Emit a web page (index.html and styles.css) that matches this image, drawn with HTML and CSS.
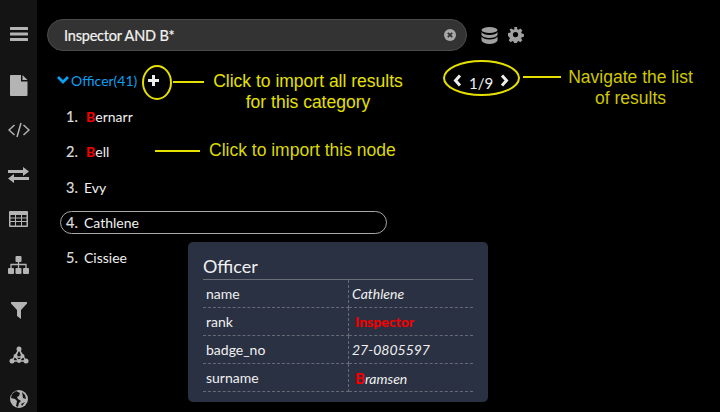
FILE: index.html
```html
<!DOCTYPE html>
<html>
  <head>
    <meta charset="utf-8">
    <link rel="stylesheet" href="styles.css">
  </head>
  <body>
    <div class="app">
      <nav class="sidebar">
        <svg class="icon menu" width="18" height="16" viewBox="0 0 18 16"><path d="M1 1h16a1 1 0 0 1 0 3H1a1 1 0 0 1 0-3zM1 6.500h16a1 1 0 0 1 0 3H1a1 1 0 0 1 0-3zM1 12h16a1 1 0 0 1 0 3H1a1 1 0 0 1 0-3z"/></svg>
        <svg class="icon file" width="18" height="21" viewBox="0 0 18 21"><path d="M1 0h10v6.500h6.500V20a1 1 0 0 1-1 1H1a1 1 0 0 1-1-1V1a1 1 0 0 1 1-1zM12.500 0l5 5h-5z"/></svg>
        <svg class="icon code" width="22" height="16" viewBox="0 0 22 16"><path d="M6.500 3L1 8l5.500 5M15.500 3L21 8l-5.500 5M13 1L9 15" fill="none" stroke="#b4b4b4" stroke-width="1.500"/></svg>
        <svg class="icon swap" width="21" height="16" viewBox="0 0 21 16"><path d="M0 3h15V0l6 4.500-6 4.500V6H0zM21 10H6V7L0 11.500 6 16v-3h15z"/></svg>
        <svg class="icon table" width="19" height="16" viewBox="0 0 19 16"><path fill-rule="evenodd" d="M1 0h17a1 1 0 0 1 1 1v14a1 1 0 0 1-1 1H1a1 1 0 0 1-1-1V1a1 1 0 0 1 1-1zM1.500 4v2.500h4.500V4zM7 4v2.500h5V4zM13 4v2.500h4.500V4zM1.500 7.500V10h4.500V7.500zM7 7.500V10h5V7.500zM13 7.500V10h4.500V7.500zM1.500 11v3.500h4.500V11zM7 11v3.500h5V11zM13 11v3.500h4.500V11z"/></svg>
        <svg class="icon tree" width="21" height="18" viewBox="0 0 21 18"><rect x="7.500" y="0" width="6" height="6" rx="1"/><rect x="0" y="12" width="6" height="6" rx="1"/><rect x="7.500" y="12" width="6" height="6" rx="1"/><rect x="15" y="12" width="6" height="6" rx="1"/><path d="M3 12V8.500h15V12M10.500 6v6" fill="none" stroke="#b4b4b4" stroke-width="1.300"/></svg>
        <svg class="icon filter" width="16" height="17" viewBox="0 0 16 17"><path d="M0 0h16v1.500L10 8v9L6 14V8L0 1.500z"/></svg>
        <svg class="icon graph" width="20" height="18" viewBox="0 0 20 18"><path d="M10 3L3 15h14zM10 3l-3.500 8h7zM6.500 11L10 15l3.500-4M3 15h14" fill="none" stroke="#b4b4b4" stroke-width="1.300"/><circle cx="10" cy="3" r="2.500"/><circle cx="3" cy="15" r="2.500"/><circle cx="17" cy="15" r="2.500"/><circle cx="6.500" cy="10" r="2"/><circle cx="13.500" cy="10" r="2"/><circle cx="10" cy="15" r="2"/></svg>
        <svg class="icon globe" width="18" height="18" viewBox="0 0 18 18"><circle cx="9" cy="9" r="9"/><path d="M6 1L2 4 1 8l4 1 2 2-1 5 2 1 1-4 2-2-3-2-1-2 2-1 1-3zM12 2l3 3 1 4-3-1zM11 14l4-2-3 4z" fill="#141414"/></svg>
      </nav>

      <main class="content">
        <div class="topbar">
          <div class="searchbox">
            <span class="query">Inspector AND B*</span>
            <svg class="clear" width="12" height="12" viewBox="0 0 12 12"><circle cx="6" cy="6" r="6" fill="#a8a8a8"/><path d="M3.800 3.800l4.400 4.400M8.200 3.800L3.800 8.200" stroke="#333" stroke-width="1.800"/></svg>
          </div>
          <svg class="db" width="17" height="17" viewBox="0 0 17 17"><g fill="#a0a0a0"><ellipse cx="8.500" cy="3" rx="8" ry="3"/><path d="M.5 5c1 2 4 3 8 3s7-1 8-3v3c-1 2-4 3-8 3s-7-1-8-3z"/><path d="M.5 9.500c1 2 4 3 8 3s7-1 8-3v4c-1 2-4 3.500-8 3.500s-7-1.500-8-3.500z"/></g></svg>
          <svg class="gear" width="16" height="16" viewBox="0 0 16 16"><path fill="#a0a0a0" fill-rule="evenodd" d="M6.500 0h3l.4 2.300 1.300.6L13.200 1.600l2.100 2.100-1.300 2 .6 1.300 2.300.5v3l-2.300.4-.6 1.300 1.300 2-2.100 2.100-2-1.300-1.300.6-.4 2.300h-3l-.4-2.300-1.300-.6-2 1.300L.700 14.200l1.300-2-.6-1.300L0 9.500v-3l2.300-.5.6-1.300-1.300-2L3.700 1.600l2 1.300 1.300-.6zM8 5.200a2.800 2.800 0 1 0 0 5.600 2.800 2.800 0 0 0 0-5.600z" transform="scale(.94)"/></svg>
        </div>

        <div class="results">
          <div class="category">
            <svg class="chevron" width="12" height="8" viewBox="0 0 12 8"><path d="M1 1l5 5 5-5" fill="none" stroke="#0d9fef" stroke-width="2.800"/></svg>
            <span>Officer(41)</span>
            <svg class="plus" width="11" height="11" viewBox="0 0 11 11"><path d="M5.500 0v11M0 5.500h11" stroke="#eee" stroke-width="3"/></svg>
          </div>
          <ol class="list">
            <li class="row"><span class="num">1.</span><span class="name match-gap"><b class="hit">B</b>ernarr</span></li>
            <li class="row"><span class="num">2.</span><span class="name match-gap"><b class="hit">B</b>ell</span></li>
            <li class="row"><span class="num">3.</span><span class="name">Evy</span></li>
            <li class="row current"><span class="num">4.</span><span class="name">Cathlene</span></li>
            <li class="row"><span class="num">5.</span><span class="name">Cissiee</span></li>
          </ol>
        </div>

        <div class="pager">
          <svg width="9" height="13" viewBox="0 0 9 13"><path d="M7 1.500L2.500 6.500 7 11.500" fill="none" stroke="#eee" stroke-width="3"/></svg>
          <span class="pages">1/9</span>
          <svg width="9" height="13" viewBox="0 0 9 13"><path d="M2 1.500L6.500 6.500 2 11.500" fill="none" stroke="#eee" stroke-width="3"/></svg>
        </div>

        <section class="popup">
          <h3 class="popup-title">Officer</h3>
          <table class="props">
            <tr><td>name</td><td class="val">Cathlene</td></tr>
            <tr><td>rank</td><td class="val"><b class="hit indent">Inspector</b></td></tr>
            <tr><td>badge_no</td><td class="val">27-0805597</td></tr>
            <tr><td>surname</td><td class="val"><b class="hit indent big">B</b>ramsen</td></tr>
          </table>
        </section>
      </main>

      <!-- annotations drawn over the screenshot -->
      <div class="ring ring-plus"></div>
      <div class="ring ring-pager"></div>
      <div class="line line-plus"></div>
      <div class="line line-node"></div>
      <div class="line line-pager"></div>
      <div class="note note-all">Click to import all results<br>for this category</div>
      <div class="note note-node">Click to import this node</div>
      <div class="note note-nav">Navigate the list<br>of results</div>
    </div>
  </body>
</html>
```

FILE: styles.css
```css
html, body {
  margin: 0;
  padding: 0;
  background: #000;
}

.app {
  position: relative;
  display: flex;
  width: 720px;
  height: 412px;
  overflow: hidden;
  font-family: Lato, sans-serif;
  color: #f0f0f0;
}

.sidebar {
  width: 37px;
  flex: none;
  background: #141414;
  display: flex;
  flex-direction: column;
  align-items: center;
  padding-top: 26px;
  box-sizing: border-box;
}
.icon { fill: #b4b4b4; display: block; flex: none; }
.menu { margin-bottom: 33px; }
.file { margin-bottom: 26px; }
.code { margin-bottom: 29px; }
.swap { margin-bottom: 28px; }
.table { margin-bottom: 29px; }
.tree { margin-bottom: 28px; }
.filter { margin-bottom: 27px; }
.graph { margin-bottom: 26px; }

.content {
  position: relative;
  flex: 1;
  padding: 19px 0 0 10px;
}

.topbar {
  display: flex;
  align-items: center;
}
.searchbox {
  width: 392px;
  height: 30px;
  background: #333;
  border: 1px solid #4a4a4a;
  border-radius: 16px;
  display: flex;
  align-items: center;
  justify-content: space-between;
  padding: 0 10px 0 16px;
}
.query {
  font-size: 14.500px;
  letter-spacing: -0.2px;
  -webkit-text-stroke: 0.2px #f2f2f2;
  color: #f2f2f2;
}
.db { margin-left: 14px; }
.gear { margin-left: 10px; }

.results {
  padding: 16px 0 0 10px;
}
.category {
  display: flex;
  align-items: center;
  font-size: 14px;
  color: #0d9fef;
  height: 26px;
}
.chevron { margin-right: 2px; }
.plus { margin-left: 11px; }

.list {
  list-style: none;
  margin: 0;
  padding: 12px 0 0 3px;
}
.row {
  display: flex;
  align-items: center;
  height: 23px;
  margin-bottom: 12.300px;
  font-size: 14px;
  width: 327px;
  border: 1px solid transparent;
  border-radius: 12px;
  box-sizing: border-box;
  padding-left: 5px;
}
.current { border-color: #a8a8a8; }
.num {
  width: 18px;
  font-size: 14.500px;
  -webkit-text-stroke: 0.2px #ddd;
  color: #ddd;
}
.match-gap { padding-left: 2px; }
.hit { color: #f00000; font-weight: 900; }

.pager {
  position: absolute;
  left: 416px;
  top: 69px;
  display: flex;
  align-items: center;
  gap: 7px;
}
.pages { font-size: 15px; padding-top: 5px; }

.popup {
  position: absolute;
  left: 151px;
  top: 242px;
  width: 300px;
  height: 160px;
  box-sizing: border-box;
  padding: 12px 15px 0;
  background: #2a3142;
  border-radius: 5px;
}
.popup-title {
  margin: 0;
  font-size: 18px;
  font-weight: 400;
  height: 25px;
  line-height: 24px;
  border-bottom: 1px solid #6a6e78;
}
.props {
  width: 270px;
  border-collapse: collapse;
  font-size: 14px;
}
.props td {
  height: 27px;
  padding: 0 0 0 3px;
  border-bottom: 1px dashed #666a74;
}
.props td:first-child { width: 142px; border-right: 1px dashed #666a74; }
.val { font-style: italic; }
.indent { font-style: normal; padding-left: 3px; }
.big { font-size: 15px; }

.ring {
  position: absolute;
  border: 2px solid #e6e000;
  border-radius: 50%;
  box-sizing: border-box;
}
.ring-plus { left: 142px; top: 65px; width: 30px; height: 35px; }
.ring-pager { left: 443px; top: 60px; width: 77px; height: 36px; }
.line {
  position: absolute;
  height: 2px;
  background: #e6e000;
}
.line-plus { left: 173px; top: 81px; width: 31px; }
.line-node { left: 155px; top: 150px; width: 45px; }
.line-pager { left: 523px; top: 76px; width: 38px; }

.note {
  position: absolute;
  font-family: "Liberation Sans", Arial, sans-serif;
  font-size: 17.500px;
  line-height: 21px;
  text-align: center;
  color: #e6e000;
  white-space: nowrap;
}
.note-all { left: 203px; top: 71px; width: 210px; }
.note-node { left: 209px; top: 140px; color: #dcd800; }
.note-nav { left: 568px; top: 67px; width: 125px; color: #cfc800; }
```
